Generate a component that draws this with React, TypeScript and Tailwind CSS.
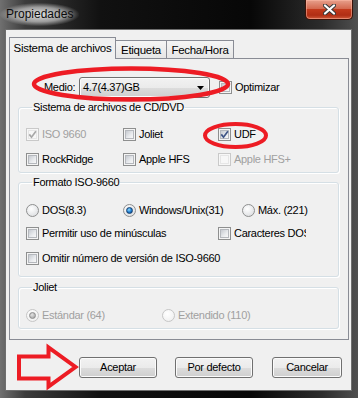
import React from 'react';

type BoxProps = { checked?: boolean; disabled?: boolean };

const CheckBox: React.FC<BoxProps> = ({ checked, disabled }) => (
  <span
    className={`relative flex h-[13px] w-[13px] shrink-0 items-center justify-center border ${
      disabled ? 'border-[#c9c9c9] bg-[#f7f7f7]' : 'border-[#8e8f8f] bg-[#f4f4f4]'
    }`}
  >
    <span
      className={`h-[9px] w-[9px] border ${
        disabled
          ? 'border-[#e6e6e6] bg-[#f7f7f7]'
          : 'border-[#b5b8bd] bg-[linear-gradient(135deg,#c6cad0,#e9ebee_60%,#f8f8f8)]'
      }`}
    />
    {checked && (
      <svg className="absolute left-[1px] top-[1px]" width="9" height="9" viewBox="0 0 9 9">
        <path
          d="M1.3 4.4 L3.5 7.2 L7.9 1.2"
          fill="none"
          stroke={disabled ? '#a8a8a8' : '#3f5586'}
          strokeWidth="1.7"
        />
      </svg>
    )}
  </span>
);

const RadioDot: React.FC<BoxProps> = ({ checked, disabled }) => (
  <span
    className={`flex h-[13px] w-[13px] shrink-0 items-center justify-center rounded-full border ${
      disabled
        ? 'border-[#c6c6c6] bg-[radial-gradient(circle_at_40%_35%,#ffffff,#ececec)]'
        : 'border-[#8e8f8f] bg-[radial-gradient(circle_at_40%_35%,#ffffff,#d6d8db)]'
    }`}
  >
    {checked && (
      <span
        className={`h-[7px] w-[7px] rounded-full border ${
          disabled
            ? 'border-[#8d8d8d] bg-[radial-gradient(circle_at_40%_35%,#e4e4e4,#9a9a9a)]'
            : 'border-[#163f6e] bg-[radial-gradient(circle_at_40%_35%,#8fdcff,#1a78cc_55%,#0b3b7e)]'
        }`}
      />
    )}
  </span>
);

type OptProps = BoxProps & { label: string; className?: string; clip?: boolean };

const Check: React.FC<OptProps> = ({ label, checked, disabled, className = '', clip }) => (
  <div className={`flex h-[13px] shrink-0 items-center gap-[3px] ${className}`}>
    <CheckBox checked={checked} disabled={disabled} />
    <span
      className={`whitespace-nowrap ${clip ? 'w-[72px] overflow-hidden' : ''} ${
        disabled ? 'text-[#a0a0a0]' : 'text-black'
      }`}
    >
      {label}
    </span>
  </div>
);

const Radio: React.FC<OptProps> = ({ label, checked, disabled, className = '' }) => (
  <div className={`flex h-[13px] shrink-0 items-center gap-[3px] ${className}`}>
    <RadioDot checked={checked} disabled={disabled} />
    <span className={`whitespace-nowrap ${disabled ? 'text-[#a0a0a0]' : 'text-black'}`}>{label}</span>
  </div>
);

const Group: React.FC<{ title: string; className?: string; children: React.ReactNode }> = ({
  title,
  className = '',
  children,
}) => (
  <fieldset
    className={`ml-[8px] mr-[9px] rounded-[3px] border border-[#d5dfe5] pl-[7px] shadow-[inset_1px_1px_0_#ffffff,1px_1px_0_#ffffff] ${className}`}
  >
    <legend className="ml-[6px] px-[1px] leading-[13px] text-black">{title}</legend>
    {children}
  </fieldset>
);

const Button: React.FC<{ label: string; className?: string }> = ({ label, className = '' }) => (
  <button
    className={`flex h-[21px] items-center justify-center rounded-[3px] border border-[#707070] bg-[linear-gradient(#f2f2f2_0%,#ebebeb_50%,#dddddd_50%,#cfcfcf_100%)] text-black shadow-[inset_0_0_0_1px_#fbfbfb] ${className}`}
  >
    {label}
  </button>
);

export default function App() {
  return (
    <div className="relative h-[398px] w-[358px] overflow-hidden bg-[linear-gradient(90deg,#707070_0%,#3c3c3c_7%,#111111_28%,#070707_70%,#2c2c2c_90%,#4f4f4f_100%)] font-['Liberation_Sans',Arial,sans-serif] text-[11px] leading-[13px] tracking-[-0.3px]">
      {/* title bar */}
      <div className="flex h-[29px] items-start">
        <span className="mt-[3px] px-[6px] py-[4px] text-[12px] leading-[15px] tracking-normal text-[#0c0c0c] bg-[radial-gradient(ellipse_at_center,rgba(235,235,235,0.95)_0%,rgba(200,200,200,0.7)_45%,rgba(120,120,120,0)_72%)]">
          Propiedades
        </span>
        <div className="ml-auto mr-[5px] flex h-[20px] w-[48px] items-center justify-center rounded-b-[5px] border border-t-0 border-[#3b1208] bg-[linear-gradient(#e7a08c_0%,#d46a50_45%,#c23a1c_50%,#b02e14_80%,#cf5a3a_100%)] shadow-[inset_0_0_0_1px_rgba(255,190,170,0.5)]">
          <svg width="13" height="11" viewBox="0 0 13 11">
            <path d="M2 1.5 L11 9.5 M11 1.5 L2 9.5" stroke="#3a3a3a" strokeWidth="4.2" strokeLinecap="round" />
            <path d="M2 1.5 L11 9.5 M11 1.5 L2 9.5" stroke="#ffffff" strokeWidth="2.2" strokeLinecap="round" />
          </svg>
        </div>
      </div>

      {/* client area */}
      <div className="ml-[5px] flex h-[362px] w-[347px] flex-col border border-[#6e6e6e] bg-[#f0f0f0] pl-[3px] pt-[7px]">
        {/* tabs */}
        <div className="flex h-[21px] items-end">
          <div className="relative z-10 -mb-px flex h-[22px] w-[107px] items-start justify-center border border-b-0 border-[#898c95] bg-[#f0f0f0] pt-[4px] text-[11.5px]">
            Sistema de archivos
          </div>
          <div className="flex h-[18px] w-[51px] items-start justify-center border border-b-0 border-l-0 border-[#898c95] bg-[linear-gradient(#f5f5f5,#e6e6e6)] pt-[3px] text-[11.5px]">
            Etiqueta
          </div>
          <div className="flex h-[18px] w-[67px] items-start justify-center border border-b-0 border-l-0 border-[#898c95] bg-[linear-gradient(#f5f5f5,#e6e6e6)] pt-[3px] text-[11.5px]">
            Fecha/Hora
          </div>
        </div>

        {/* panel */}
        <div className="flex w-[340px] flex-col border border-[#898c95] bg-[#f0f0f0] pb-[10px] text-black">
          <div className="mt-[18px] flex h-[21px] items-center pl-[34px]">
            <span className="w-[35px]">Medio:</span>
            <div className="flex h-[21px] w-[131px] items-center justify-between rounded-[3px] border border-[#707070] bg-[linear-gradient(#f2f2f2_0%,#ebebeb_50%,#dddddd_50%,#cfcfcf_100%)] pl-[3px] pr-[5px] shadow-[inset_0_0_0_1px_#fbfbfb]">
              <span>4.7(4.37)GB</span>
              <svg width="7" height="4" viewBox="0 0 7 4">
                <path d="M0 0 H7 L3.5 4 Z" fill="#000000" />
              </svg>
            </div>
            <Check label="Optimizar" className="ml-[9px]" />
          </div>

          <Group title="Sistema de archivos de CD/DVD" className="mt-[3px] pb-[6px]">
            <div className="mt-[14px] flex">
              <Check label="ISO 9660" checked disabled className="w-[97px]" />
              <Check label="Joliet" className="w-[95px]" />
              <Check label="UDF" checked />
            </div>
            <div className="mt-[12px] flex">
              <Check label="RockRidge" className="w-[97px]" />
              <Check label="Apple HFS" className="w-[95px]" />
              <Check label="Apple HFS+" disabled />
            </div>
          </Group>

          <Group title="Formato ISO-9660" className="mt-[3px] pb-[11px]">
            <div className="mt-[15px] flex">
              <Radio label="DOS(8.3)" className="w-[97px]" />
              <Radio label="Windows/Unix(31)" checked className="w-[119px]" />
              <Radio label="Máx. (221)" />
            </div>
            <div className="mt-[10px] flex">
              <Check label="Permitir uso de minúsculas" className="w-[192px]" />
              <Check label="Caracteres DOS" clip />
            </div>
            <div className="mt-[12px] flex">
              <Check label="Omitir número de versión de ISO-9660" />
            </div>
          </Group>

          <Group title="Joliet" className="mt-[4px] pb-[6px]">
            <div className="mt-[15px] flex">
              <Radio label="Estándar (64)" checked disabled className="w-[136px]" />
              <Radio label="Extendido (110)" disabled />
            </div>
          </Group>
        </div>

        {/* buttons */}
        <div className="mt-[17px] flex">
          <Button label="Aceptar" className="ml-[70px] w-[78px]" />
          <Button label="Por defecto" className="ml-[18px] w-[78px]" />
          <Button label="Cancelar" className="ml-[19px] w-[70px]" />
        </div>
      </div>

      {/* red annotations drawn over the dialog */}
      <svg className="pointer-events-none absolute left-0 top-0" width="358" height="398" viewBox="0 0 358 398">
        <ellipse cx="131" cy="84" rx="97" ry="15.5" fill="none" stroke="#ed1c24" strokeWidth="4.5" />
        <ellipse cx="235.5" cy="135.5" rx="30.5" ry="11.5" fill="none" stroke="#ed1c24" strokeWidth="4" />
        <polygon
          points="19,356.5 48.5,356.5 48.5,347.5 75.5,367 48.5,386.5 48.5,378.5 19,378.5"
          fill="none"
          stroke="#ed1c24"
          strokeWidth="4"
          strokeLinejoin="miter"
        />
      </svg>
    </div>
  );
}
